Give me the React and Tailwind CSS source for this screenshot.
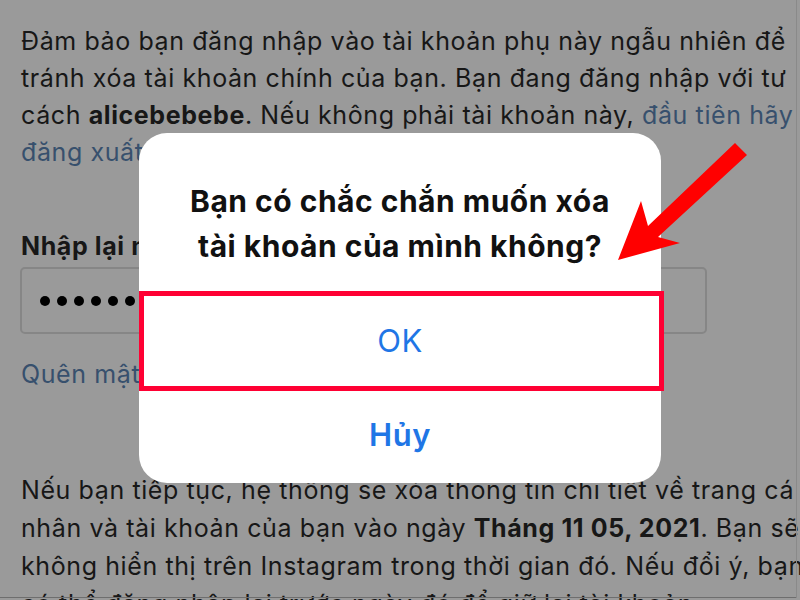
export default function App() {
  const font = { fontFamily: 'Inter, "Noto Sans", sans-serif' };
  return (
    <div className="relative w-[800px] h-[600px] overflow-hidden bg-[#9a9a9a] text-[#171717]" style={font}>
      <div className="pl-[21px] pt-[23px] text-[25px] leading-[37px] tracking-[0.6px] whitespace-nowrap">
        <div>Đảm bảo bạn đăng nhập vào tài khoản phụ này ngẫu nhiên để</div>
        <div>tránh xóa tài khoản chính của bạn. Bạn đang đăng nhập với tư</div>
        <div>
          cách <span className="font-bold">alicebebebe</span>. Nếu không phải tài khoản này,{' '}
          <span className="text-[#37506d]">đầu tiên hãy</span>
        </div>
        <div className="text-[#37506d]">đăng xuất</div>

        <div className="mt-[57px] font-bold">Nhập lại mật khẩu</div>
        <div className="mt-[2px] ml-[-1px] w-[687px] h-[67px] rounded-[5px] border-2 border-[#868686] flex items-center gap-[7px] pl-[18px]">
          {Array.from({ length: 12 }).map((_, i) => (
            <div key={i} className="w-[10px] h-[10px] rounded-full bg-black" />
          ))}
        </div>
        <div className="mt-[22px] text-[#37506d]">Quên mật khẩu?</div>

        <div className="mt-[78px] leading-[38px]">
          <div>Nếu bạn tiếp tục, hệ thống sẽ xóa thông tin chi tiết về trang cá nhân</div>
          <div>
            nhân và tài khoản của bạn vào ngày <span className="font-bold">Tháng 11 05, 2021</span>. Bạn sẽ
          </div>
          <div>không hiển thị trên Instagram trong thời gian đó. Nếu đổi ý, bạn</div>
          <div>có thể đăng nhập lại trước ngày đó để giữ lại tài khoản.</div>
        </div>
      </div>

      <div className="absolute left-0 top-[597px] w-[797px] h-[1px] bg-[#6e6e6e]" />
      <div className="absolute left-[796px] top-0 w-[1px] h-[598px] bg-[#8a8a8a]" />

      {/* Dialog */}
      <div className="absolute left-[139px] top-[133px] w-[522px] h-[350px] bg-white rounded-[28px] flex flex-col">
        <div className="h-[158px] flex flex-col items-center justify-center pt-[24px] text-[30px] leading-[45px] font-bold tracking-[0.5px] text-[#111]">
          <div>Bạn có chắc chắn muốn xóa</div>
          <div>tài khoản của mình không?</div>
        </div>
        <div className="h-[100px] flex items-center justify-center text-[31px] tracking-[0.5px] text-[#1f76e6]">OK</div>
        <div className="flex-1 flex items-center justify-center pb-[4px] text-[31px] font-semibold tracking-[0.5px] text-[#1f76e6]">Hủy</div>
      </div>

      {/* Red highlight */}
      <div className="absolute left-[139px] top-[291px] w-[525px] h-[100px] border-[5px] border-[#ff0033]" />

      {/* Arrow */}
      <svg className="absolute left-0 top-0" width="800" height="600" viewBox="0 0 800 600">
        <polygon
          points="735,143 747,155 658,237 680,243 618,260 641,201 648,226"
          fill="#ff0000"
        />
      </svg>
    </div>
  );
}
